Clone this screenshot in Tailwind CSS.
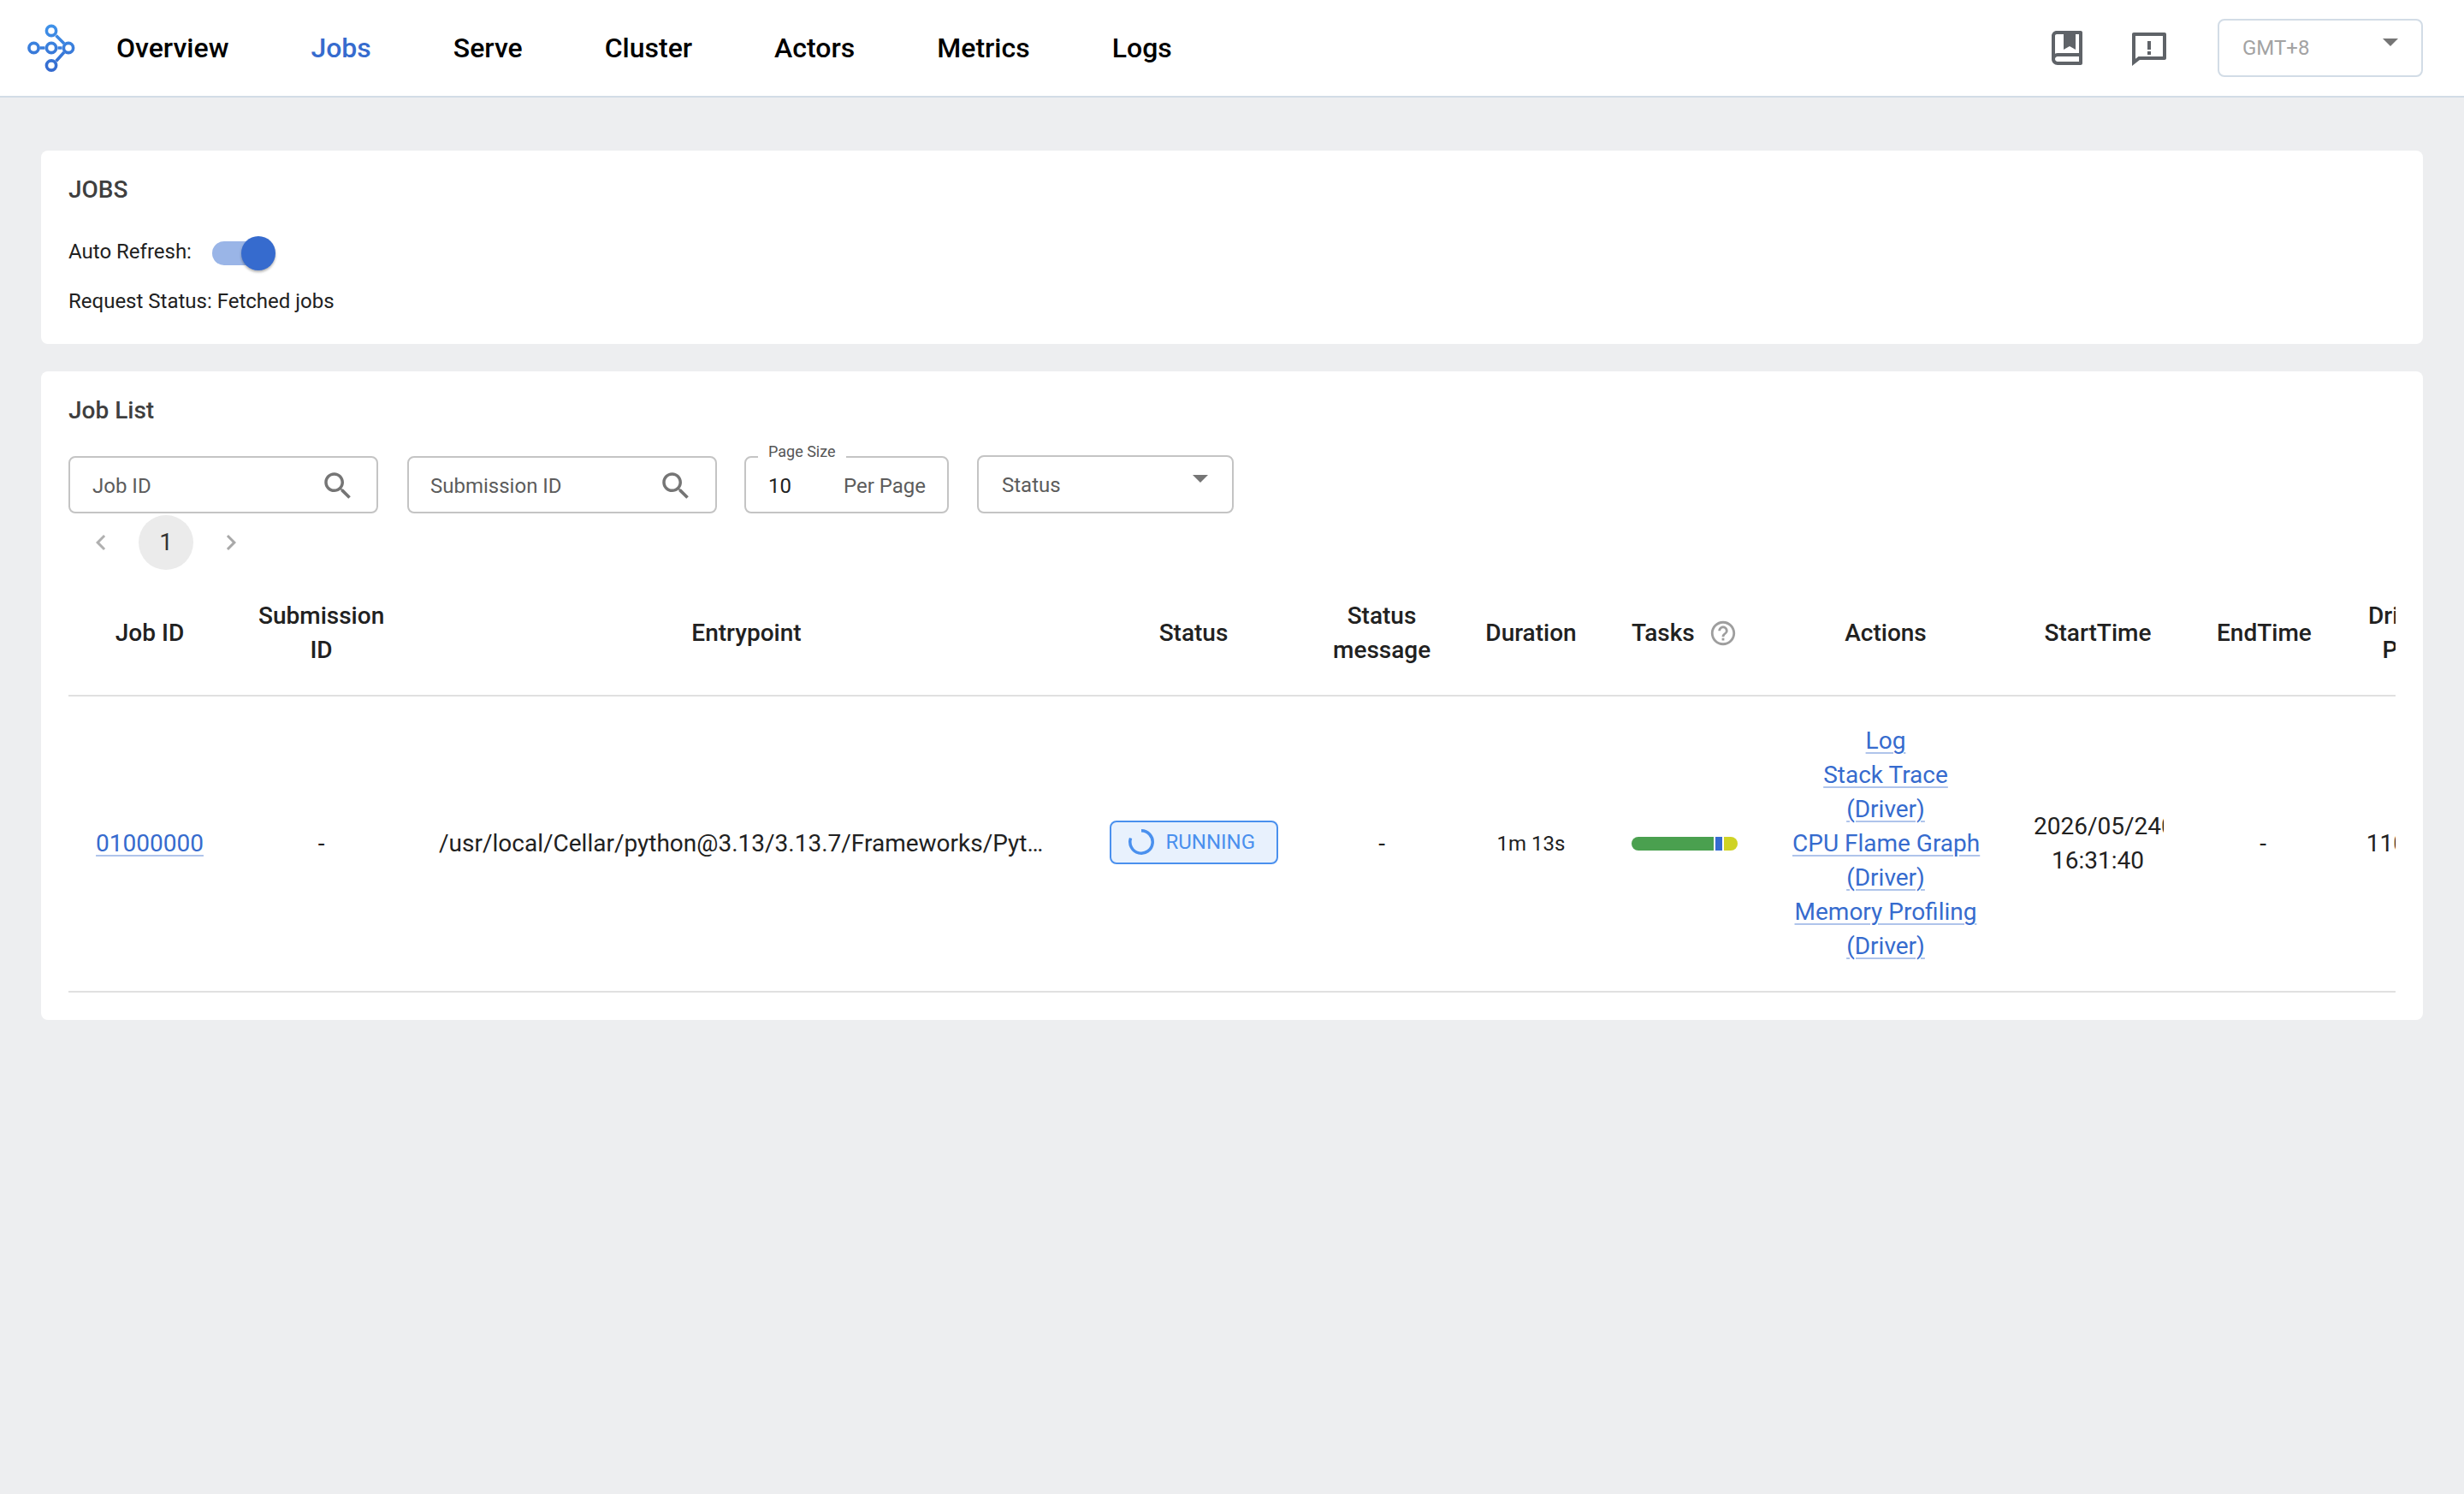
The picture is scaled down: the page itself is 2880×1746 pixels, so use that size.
<!DOCTYPE html>
<html lang="en">
<head>
  <meta charset="UTF-8">
  <title>Jobs</title>
  <script src="https://cdn.jsdelivr.net/npm/@tailwindcss/browser@4"></script>
</head>
<body class="min-h-screen bg-[#edeef0] font-['Roboto',sans-serif] text-[28px] text-[#212121]">

  <!-- top bar -->
  <header class="h-[114px] flex items-center bg-white border-b-2 border-[#d2dce6] pl-[30px] pr-12">
    <svg class="w-[60px] h-[60px] shrink-0" viewBox="30 26 60 60" fill="none" stroke="url(#logoGrad)" stroke-width="3.6">
      <defs>
        <linearGradient id="logoGrad" gradientUnits="userSpaceOnUse" x1="60" y1="28" x2="60" y2="85">
          <stop offset="0" stop-color="#3f93ea"/>
          <stop offset="1" stop-color="#3468cd"/>
        </linearGradient>
      </defs>
      <path d="M46.5 56H52.5M67.5 56H72.5M65.5 41.5L75 51M65.5 71.5L75 61"/>
      <circle cx="60" cy="36" r="5.6"/>
      <circle cx="39.5" cy="56" r="5.6"/>
      <circle cx="60" cy="56" r="5.6"/>
      <circle cx="80" cy="56" r="5.6"/>
      <circle cx="60" cy="76.5" r="5.6"/>
    </svg>
    <nav class="flex gap-24 ml-[46px] text-[32px] font-medium text-black">
      <a href="#">Overview</a>
      <a href="#" class="text-[#366bce]">Jobs</a>
      <a href="#">Serve</a>
      <a href="#">Cluster</a>
      <a href="#">Actors</a>
      <a href="#">Metrics</a>
      <a href="#">Logs</a>
    </nav>
    <div class="ml-auto flex items-center">
      <svg class="w-12 h-12 text-[#5f6368]" viewBox="0 0 24 24" fill="currentColor"><path fill-rule="evenodd" d="M3 18.5V5C3 3.34315 4.34315 2 6 2H20C20.5523 2 21 2.44772 21 3V21C21 21.5523 20.5523 22 20 22H6.5C4.567 22 3 20.433 3 18.5ZM19 20V17H6.5C5.67157 17 5 17.6716 5 18.5C5 19.3284 5.67157 20 6.5 20H19ZM10 4H6C5.44772 4 5 4.44772 5 5V15.3368C5.45463 15.1208 5.9632 15 6.5 15H19V4H17V13L13.5 11L10 13V4Z"/></svg>
      <svg class="w-12 h-12 ml-12 text-[#5f6368]" viewBox="0 0 24 24" fill="currentColor"><path d="M6.45455 19L2 22.5V4C2 3.44772 2.44772 3 3 3H21C21.5523 3 22 3.44772 22 4V18C22 18.5523 21.5523 19 21 19H6.45455ZM5.76282 17H20V5H4V18.3851L5.76282 17ZM11 14H13V16H11V14ZM11 8H13V13H11V8Z"/></svg>
      <div class="ml-14 w-60 h-[68px] flex items-center justify-between border-2 border-[#d2dce6] rounded-lg pl-[27px] pr-[27px] text-2xl text-[#a3a3a3]">
        <span>GMT+8</span>
        <span class="w-0 h-0 -mt-[14px] border-x-[9px] border-x-transparent border-t-[9px] border-t-[#757575]"></span>
      </div>
    </div>
  </header>

  <main class="mx-12 pt-[62px]">

    <section class="bg-white rounded-lg px-8 pt-8 pb-[30px]">
      <h2 class="h-6 leading-7 font-medium text-[#3f3f3f]">JOBS</h2>
      <div class="mt-11 h-10 flex items-center text-2xl">
        <span class="mb-1">Auto Refresh:</span>
        <div class="relative ml-[24px] w-[68px] h-7 rounded-full bg-[#9ab5e7]">
          <span class="absolute left-[34px] -top-[6px] w-10 h-10 rounded-full bg-[#366bce] shadow-[0_2px_3px_rgba(0,0,0,0.3)]"></span>
        </div>
      </div>
      <p class="mt-4 leading-10 text-2xl">Request Status: Fetched jobs</p>
    </section>

    <section class="mt-8 bg-white rounded-lg px-8 pt-8 pb-8">
      <h2 class="h-6 leading-[27px] font-medium text-[#3f3f3f]">Job List</h2>

      <div class="mt-[42px] h-[68px] flex items-end gap-8 text-2xl">
        <label class="w-[362px] h-[67px] flex items-center border-2 border-[#c4c4c4] rounded-lg pl-[26px] pr-[24px] pt-[2px]">
          <input class="flex-1 min-w-0 outline-none placeholder:text-[#5c5c5c]" placeholder="Job ID">
          <svg class="w-[42px] h-[42px] shrink-0 text-[#757575]" viewBox="0 0 24 24" fill="currentColor"><path d="M15.5 14h-.79l-.28-.27C15.41 12.59 16 11.11 16 9.5 16 5.91 13.09 3 9.5 3S3 5.91 3 9.5 5.91 16 9.5 16c1.61 0 3.09-.59 4.23-1.57l.27.28v.79l5 4.99L20.49 19l-4.99-5zm-6 0C7.01 14 5 11.99 5 9.5S7.01 5 9.5 5 14 7.01 14 9.5 11.99 14 9.5 14z"/></svg>
        </label>
        <label class="ml-[2px] w-[362px] h-[67px] flex items-center border-2 border-[#c4c4c4] rounded-lg pl-[25px] pr-[25px] pt-[2px]">
          <input class="flex-1 min-w-0 outline-none placeholder:text-[#5c5c5c]" placeholder="Submission ID">
          <svg class="w-[42px] h-[42px] shrink-0 text-[#757575]" viewBox="0 0 24 24" fill="currentColor"><path d="M15.5 14h-.79l-.28-.27C15.41 12.59 16 11.11 16 9.5 16 5.91 13.09 3 9.5 3S3 5.91 3 9.5 5.91 16 9.5 16c1.61 0 3.09-.59 4.23-1.57l.27.28v.79l5 4.99L20.49 19l-4.99-5zm-6 0C7.01 14 5 11.99 5 9.5S7.01 5 9.5 5 14 7.01 14 9.5 11.99 14 9.5 14z"/></svg>
        </label>
        <div class="relative w-[239px] h-[67px] flex items-center justify-between border-2 border-[#c4c4c4] rounded-lg pl-[26px] pr-[25px] pt-[2px]">
          <span class="absolute left-[14px] -top-[19px] h-[19px] px-3 bg-white text-lg leading-6 text-[#555]">Page Size</span>
          <span>10</span>
          <span class="text-[#5c5c5c]">Per Page</span>
        </div>
        <div class="ml-px w-[300px] h-[68px] flex items-center justify-between border-2 border-[#c4c4c4] rounded-lg pl-[27px] pr-[28px] pt-px">
          <span class="text-[#5c5c5c]">Status</span>
          <span class="w-0 h-0 -mt-[14px] border-x-[9px] border-x-transparent border-t-[9px] border-t-[#757575]"></span>
        </div>
      </div>

      <!-- pagination -->
      <div class="mt-[2px] h-16 flex">
        <span class="w-16 h-16 mx-[6px] flex items-center justify-center">
          <svg class="w-9 h-9 text-[#b0b0b0]" viewBox="0 0 24 24" fill="currentColor"><path d="M15.41 7.41 14 6l-6 6 6 6 1.41-1.41L10.83 12z"/></svg>
        </span>
        <span class="w-16 h-16 mx-[6px] flex items-center justify-center rounded-full bg-[#ebebeb] text-[#333]">1</span>
        <span class="w-16 h-16 mx-[6px] flex items-center justify-center">
          <svg class="w-9 h-9 text-[#a8a8a8]" viewBox="0 0 24 24" fill="currentColor"><path d="M10 6 8.59 7.41 13.17 12l-4.58 4.59L10 18l6-6z"/></svg>
        </span>
      </div>

      <div class="mt-[2px] overflow-hidden">
        <table class="table-fixed w-[2799px] border-collapse leading-10">
          <colgroup>
            <col class="w-[190px]"><col class="w-[211px]"><col class="w-[783px]"><col class="w-[262px]"><col class="w-[178px]"><col class="w-[171px]"><col class="w-[188px]"><col class="w-[282px]"><col class="w-[214px]"><col class="w-[172px]"><col class="w-[148px]">
          </colgroup>
          <thead>
            <tr class="border-b-2 border-[#e0e0e0] font-medium text-center">
              <th class="p-8 font-medium">Job ID</th>
              <th class="p-8 font-medium">Submission ID</th>
              <th class="p-8 font-medium">Entrypoint</th>
              <th class="p-8 font-medium">Status</th>
              <th class="p-8 font-medium">Status message</th>
              <th class="p-8 font-medium">Duration</th>
              <th class="p-8 font-medium whitespace-nowrap">
                <span class="flex items-center justify-between">Tasks
                  <svg class="w-[34px] h-[34px] text-[#9e9e9e]" viewBox="0 0 24 24" fill="currentColor"><path d="M11 18h2v-2h-2v2zm1-16C6.48 2 2 6.48 2 12s4.48 10 10 10 10-4.48 10-10S17.52 2 12 2zm0 18c-4.41 0-8-3.59-8-8s3.59-8 8-8 8 3.59 8 8-3.59 8-8 8zm0-14c-2.21 0-4 1.79-4 4h2c0-1.1.9-2 2-2s2 .9 2 2c0 2-3 1.75-3 5h2c0-2.25 3-2.5 3-5 0-2.21-1.79-4-4-4z"/></svg>
                </span>
              </th>
              <th class="p-8 font-medium">Actions</th>
              <th class="p-8 font-medium">StartTime</th>
              <th class="p-8 font-medium">EndTime</th>
              <th class="p-8 font-medium">Driver Pid</th>
            </tr>
          </thead>
          <tbody>
            <tr class="border-b-2 border-[#e0e0e0] text-center">
              <td class="p-8"><a href="#" class="text-[#366bce] underline decoration-2 decoration-[#366bce]/40 underline-offset-4">01000000</a></td>
              <td class="p-8">-</td>
              <td class="p-8 text-left"><div class="truncate">/usr/local/Cellar/python@3.13/3.13.7/Frameworks/Python.framework/Versions/3.13/bin/python job.py</div></td>
              <td class="p-8">
                <span class="w-[197px] h-[51px] mx-auto mb-1 flex items-center gap-[14px] pl-[20px] border-2 border-[#4a90ee] rounded-lg bg-[#e8f1fd] text-2xl text-[#4a90ee]">
                  <svg class="w-[30px] h-[30px]" viewBox="0 0 30 30" fill="none" stroke="currentColor" stroke-width="3.5"><path d="M15 1.8A13.2 13.2 0 1 1 2.6 10.5"/></svg>
                  RUNNING
                </span>
              </td>
              <td class="p-8">-</td>
              <td class="p-8 text-2xl whitespace-nowrap">1m 13s</td>
              <td class="p-8">
                <div class="flex h-4 gap-[2px] rounded-full overflow-hidden">
                  <span class="w-[96px] bg-[#4aa04f]"></span>
                  <span class="w-2 bg-[#356bd0]"></span>
                  <span class="flex-1 bg-[#cfd325]"></span>
                </div>
              </td>
              <td class="p-8 whitespace-nowrap">
                <a href="#" class="block text-[#366bce] underline decoration-2 decoration-[#366bce]/40 underline-offset-4">Log</a>
                <a href="#" class="block text-[#366bce] underline decoration-2 decoration-[#366bce]/40 underline-offset-4">Stack Trace<br>(Driver)</a>
                <a href="#" class="block text-[#366bce] underline decoration-2 decoration-[#366bce]/40 underline-offset-4">CPU Flame Graph<br>(Driver)</a>
                <a href="#" class="block text-[#366bce] underline decoration-2 decoration-[#366bce]/40 underline-offset-4">Memory Profiling<br>(Driver)</a>
              </td>
              <td class="p-8">
                <div class="-mr-[2px] overflow-hidden whitespace-nowrap text-left">2026/05/240</div>
                <div>16:31:40</div>
              </td>
              <td class="p-8">-</td>
              <td class="p-8">11012</td>
            </tr>
          </tbody>
        </table>
      </div>
    </section>
  </main>

</body>
</html>
